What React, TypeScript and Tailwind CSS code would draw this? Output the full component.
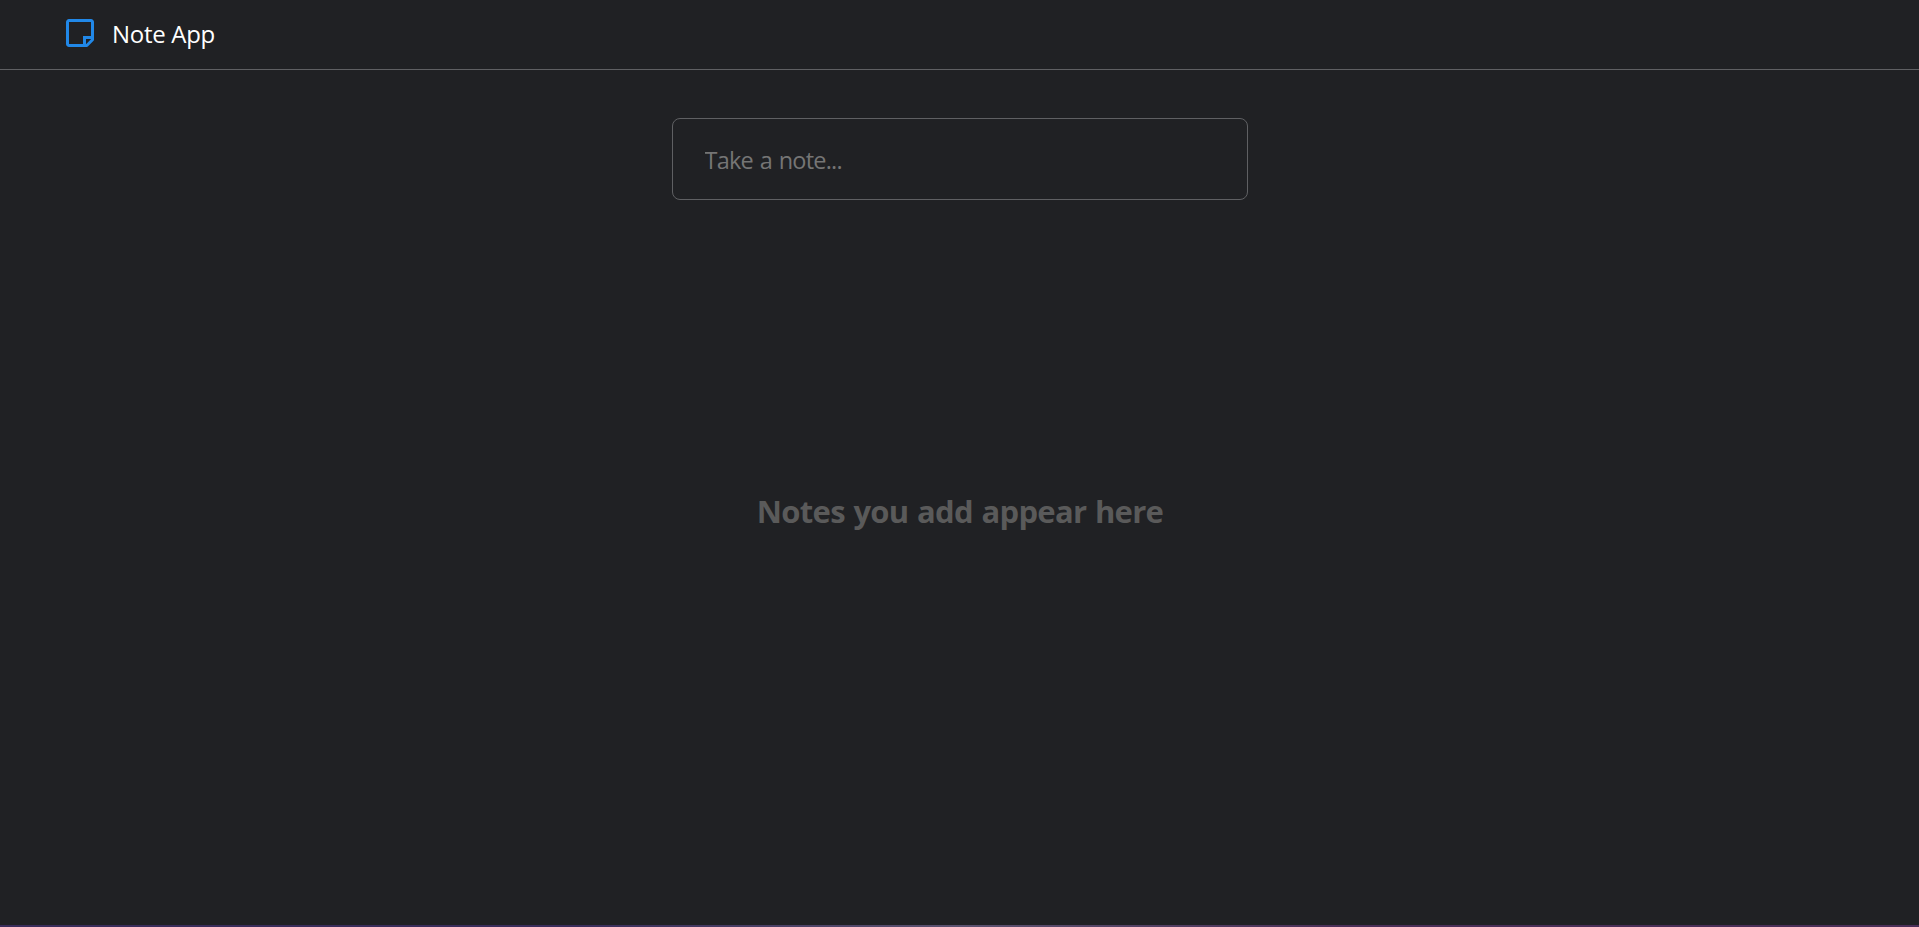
function NoteIcon() {
  return (
    <svg
      className="h-7 w-7 shrink-0"
      viewBox="0 0 28 28"
      fill="none"
      stroke="#2188e8"
      strokeWidth="3"
      strokeLinejoin="round"
      aria-hidden="true"
    >
      <path d="M3 1.5H25a1.5 1.5 0 0 1 1.5 1.5V20.8L20.8 26.5H3A1.5 1.5 0 0 1 1.5 25V3A1.5 1.5 0 0 1 3 1.5Z" />
      <path d="M26.5 18.5H18.5V26.5" strokeLinejoin="miter" />
    </svg>
  );
}

export default function App() {
  return (
    <div className="flex h-screen flex-col overflow-hidden bg-[#202124] font-['Open_Sans','Noto_Sans',sans-serif]">
      <header className="flex h-[70px] shrink-0 items-center border-b border-[#5f6063] pl-[66px]">
        <div className="-mt-[3px] flex">
          <NoteIcon />
        </div>
        <h1 className="-mt-0.5 ml-[18px] text-2xl font-normal tracking-[-0.3px] text-white">Note App</h1>
      </header>
      <main className="flex flex-1 flex-col items-center pt-12">
        <input
          className="h-[82px] w-[576px] shrink-0 rounded-lg border border-[#5f6063] bg-transparent px-8 pt-px text-[23.5px] tracking-[-0.8px] text-white outline-none [word-spacing:1.5px] placeholder:text-[#757575]"
          placeholder="Take a note..."
        />
        <h2 className="mt-[289px] pl-px text-[31px] leading-[44px] font-bold tracking-[-0.7px] text-[#5a5a5a] [word-spacing:1.2px]">
          Notes you add appear here
        </h2>
      </main>
      <div className="h-0.5 shrink-0 bg-linear-to-r from-[#392d5b] from-30% via-[#5b5270] via-50% to-[#4a2f58] to-70%" />
    </div>
  );
}
